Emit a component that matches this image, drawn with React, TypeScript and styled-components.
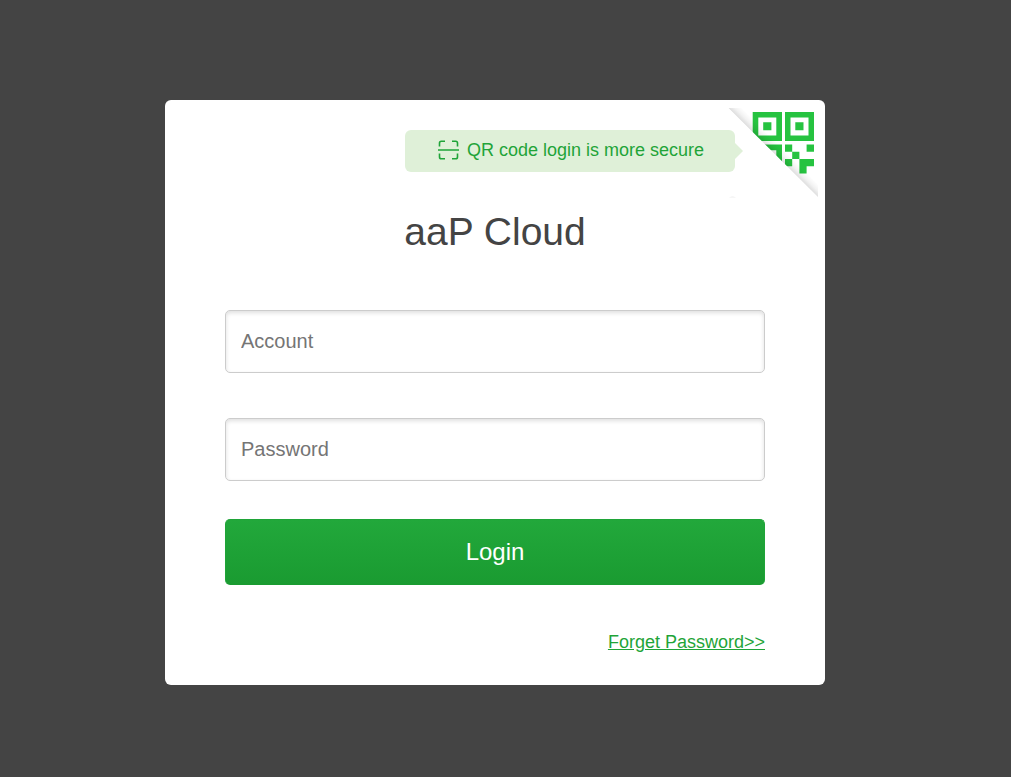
import React from "react";
import styled, { createGlobalStyle } from "styled-components";

const GlobalStyle = createGlobalStyle`
  *, *::before, *::after { box-sizing: border-box; }
  body {
    margin: 0;
    background: #444444;
    font-family: Arial, "Liberation Sans", sans-serif;
    color: #444444;
  }
`;

const Page = styled.main`
  display: flex;
  justify-content: center;
  align-items: flex-start;
  min-height: 100vh;
  padding: 100px 21px 80px 0;
`;

const Card = styled.form`
  position: relative;
  display: flex;
  flex-direction: column;
  width: 100%;
  max-width: 660px;
  padding: 30px 60px;
  border-radius: 6px;
  background: #ffffff;
`;

const Tip = styled.div`
  position: relative;
  display: flex;
  align-items: center;
  justify-content: center;
  gap: 8px;
  align-self: flex-end;
  width: 330px;
  height: 42px;
  margin-right: 30px;
  padding: 0 0 2px 2px;
  border-radius: 6px;
  background: #dff0d8;
  color: #1fa438;
  font-size: 18px;
  line-height: 20px;

  &::after {
    content: "";
    position: absolute;
    top: 13px;
    left: 100%;
    border: 8px solid transparent;
    border-left-color: #dff0d8;
    border-right-width: 0;
  }
`;

const QrSwitch = styled.button`
  position: absolute;
  top: 8px;
  right: 7px;
  padding: 0;
  border: 0;
  background: none;
  cursor: pointer;

  svg { display: block; }
`;

const Title = styled.h1`
  margin: 36px 0 54px;
  font-size: 39px;
  line-height: 48px;
  font-weight: 400;
  text-align: center;
`;

const Field = styled.input`
  width: 100%;
  height: 63px;
  margin-bottom: 45px;
  padding: 0 15px;
  border: 1px solid #cccccc;
  border-radius: 5px;
  background: #ffffff;
  box-shadow: inset 0 2px 4px rgba(0, 0, 0, 0.13);
  font: 20px Arial, "Liberation Sans", sans-serif;
  color: #444444;

  &::placeholder { color: #757575; }
`;

const PasswordField = styled(Field)`
  margin-bottom: 38px;
`;

const LoginButton = styled.button`
  height: 66px;
  border: 1px solid #1fa438;
  border-bottom-color: #1a9b31;
  border-radius: 5px;
  background: linear-gradient(#22a83b, #1a9b31);
  color: #ffffff;
  font: 24px Arial, "Liberation Sans", sans-serif;
  cursor: pointer;
`;

const ForgetLink = styled.a`
  align-self: flex-end;
  margin: 45px 0 1px;
  color: #1fa438;
  font-size: 18px;
  line-height: 24px;
`;

const ScanIcon = () => (
  <svg width="21" height="20" viewBox="0 0 21 20" fill="none" stroke="#1fa438" strokeWidth="1.6" aria-hidden="true">
    <path d="M1.5 6.500V3q0-1.800 1.800-1.800H7M14 1.200h3.700q1.800 0 1.800 1.800v3.500M1.500 13.500V17q0 1.800 1.800 1.800H7M14 18.800h3.700q1.800 0 1.800-1.800v-3.500M0 10h21" />
  </svg>
);

const QrCorner = () => (
  <svg width="90" height="90" viewBox="0 0 90 90" aria-hidden="true">
    <defs>
      <linearGradient id="foldShadow" gradientUnits="userSpaceOnUse" x1="45" y1="45" x2="52" y2="38">
        <stop offset="0" stopColor="#000000" stopOpacity="0.14" />
        <stop offset="0.5" stopColor="#000000" stopOpacity="0.05" />
        <stop offset="1" stopColor="#000000" stopOpacity="0" />
      </linearGradient>
      <clipPath id="foldClip">
        <path d="M0.500 0L90 89V0z" />
      </clipPath>
    </defs>
    <g clipPath="url(#foldClip)">
      <g fill="#26c340" fillRule="evenodd">
        <path d="M24.700 4H54v29H24.700zM30.300 9.500v18h18v-18zM35.200 14.300h8.200v8h-8.200z" />
        <path d="M57 4h29v29H57zM62.500 9.500v18h18v-18zM67.300 14.300h8.200v8h-8.200z" />
        <path d="M24.700 36.600H54v29H24.700zM30.300 42.200v18h18v-18zM35.200 47h8.200v8h-8.200z" />
        <path d="M57 36.600h7.200v7.200h7.200v7.200h-7.200v7.200H57V51h7.200v-7.200H57zM78.600 36.600H86v7.200h-7.400zM71.400 51H86v7.200h-7.400v7.200h-7.200z" />
      </g>
      <path d="M0 0L90 90V0z" fill="url(#foldShadow)" />
    </g>
    <path d="M1 90q3.500-4 7 0z" fill="#f6f6f6" />
  </svg>
);

export default function App() {
  return (
    <>
      <GlobalStyle />
      <Page>
        <Card onSubmit={(event: React.FormEvent) => event.preventDefault()}>
          <Tip>
            <ScanIcon />
            <span>QR code login is more secure</span>
          </Tip>
          <QrSwitch type="button" aria-label="QR code login">
            <QrCorner />
          </QrSwitch>
          <Title>aaP Cloud</Title>
          <Field type="text" aria-label="Account" placeholder="Account" />
          <PasswordField type="password" aria-label="Password" placeholder="Password" />
          <LoginButton type="submit">Login</LoginButton>
          <ForgetLink href="#forget">Forget Password&gt;&gt;</ForgetLink>
        </Card>
      </Page>
    </>
  );
}
